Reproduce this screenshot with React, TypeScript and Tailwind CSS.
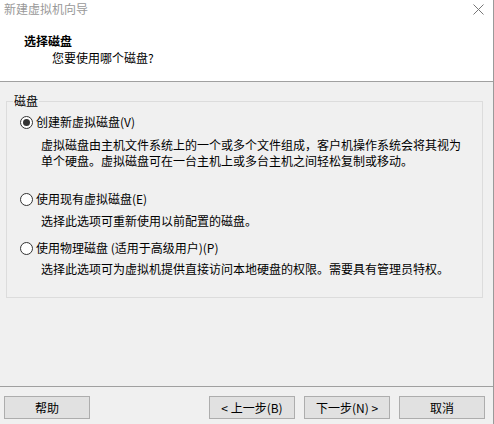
import { ReactNode } from "react";

const font = {
  fontFamily: '"Noto Sans CJK SC", "Liberation Sans", sans-serif',
};

function Radio(props: { checked?: boolean; children: ReactNode }) {
  const { checked, children } = props;
  return (
    <div className="flex items-center h-4 ml-[13px]">
      <span className="w-[13px] h-[13px] rounded-full border border-[#333] bg-white flex items-center justify-center">
        {checked && <span className="w-[7px] h-[7px] rounded-full bg-[#333]" />}
      </span>
      <span className="ml-[3px]">{children}</span>
    </div>
  );
}

function Button(props: { children: ReactNode; className?: string }) {
  const { children, className } = props;
  return (
    <div
      className={`w-[86px] h-[23px] border border-[#adadad] bg-[#e1e1e1] flex items-center justify-center ${className ?? ""}`}
    >
      {children}
    </div>
  );
}

export default function App() {
  return (
    <div
      className="w-[494px] h-[424px] bg-[#f0f0f0] flex flex-col border-r border-[#9a9a9a] text-[12px] leading-4 text-black overflow-hidden"
      style={font}
    >
      {/* title bar + header */}
      <div className="h-[82px] bg-white border-b border-[#a0a0a0] flex flex-col">
        <div className="flex items-start justify-between pl-1 pt-[1px] pr-[9px]">
          <span className="text-[#999]">新建虚拟机向导</span>
          <svg width="11" height="11" viewBox="0 0 11 11" className="mt-[3px]">
            <path d="M0.5 0.5 L10.5 10.5 M10.5 0.5 L0.5 10.5" stroke="#777" strokeWidth="1" />
          </svg>
        </div>
        <div className="pl-6 mt-[16px] font-bold">选择磁盘</div>
        <div className="pl-[52px] mt-[1px]">您要使用哪个磁盘?</div>
      </div>

      {/* body */}
      <div className="flex-1 px-[6px] pt-[19px] border-b border-[#a0a0a0]">
        <div className="relative w-[477px] h-[197px] border border-[#dcdcdc] pt-3">
          <span className="absolute left-[6px] -top-[9px] px-[1px] bg-[#f0f0f0]">磁盘</span>
          <Radio checked>创建新虚拟磁盘(V)</Radio>
          <div className="ml-[34px] mt-[7px]">
            虚拟磁盘由主机文件系统上的一个或多个文件组成，客户机操作系统会将其视为
            <br />
            单个硬盘。虚拟磁盘可在一台主机上或多台主机之间轻松复制或移动。
          </div>
          <div className="mt-[22px]">
            <Radio>使用现有虚拟磁盘(E)</Radio>
          </div>
          <div className="ml-[34px] mt-[6px]">选择此选项可重新使用以前配置的磁盘。</div>
          <div className="mt-[11px]">
            <Radio>使用物理磁盘 (适用于高级用户)(P)</Radio>
          </div>
          <div className="ml-[34px] mt-[5px]">
            选择此选项可为虚拟机提供直接访问本地硬盘的权限。需要具有管理员特权。
          </div>
        </div>
      </div>

      {/* footer */}
      <div className="h-[37px] flex items-start pt-[9px] pl-1">
        <Button>帮助</Button>
        <Button className="ml-[119px]">&lt; 上一步(B)</Button>
        <Button className="ml-[9px]">下一步(N) &gt;</Button>
        <Button className="ml-[9px]">取消</Button>
      </div>
    </div>
  );
}
